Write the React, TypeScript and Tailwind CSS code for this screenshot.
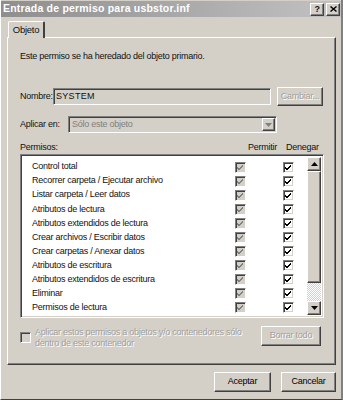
import React from "react";

const permisos = [
  "Control total",
  "Recorrer carpeta / Ejecutar archivo",
  "Listar carpeta / Leer datos",
  "Atributos de lectura",
  "Atributos extendidos de lectura",
  "Crear archivos / Escribir datos",
  "Crear carpetas / Anexar datos",
  "Atributos de escritura",
  "Atributos extendidos de escritura",
  "Eliminar",
  "Permisos de lectura",
];

// raised 3D edge, classic windows style
const raised =
  "border border-t-white border-l-white border-r-[#404040] border-b-[#404040] shadow-[inset_-1px_-1px_#808080,inset_1px_1px_#d4d0c8]";
const sunken =
  "border border-t-[#808080] border-l-[#808080] border-r-white border-b-white shadow-[inset_1px_1px_#404040,inset_-1px_-1px_#d4d0c8]";

const Check = ({ color }) => (
  <svg width="7" height="7" viewBox="0 0 7 7">
    <path d="M0 3 L2 5 L6 1 M0 4 L2 6 L6 2" stroke={color} strokeWidth="1" fill="none" />
  </svg>
);

const CheckBox = ({ disabled, checked }) => (
  <div
    className={`w-[11px] h-[11px] flex items-center justify-center ${sunken} ${
      disabled ? "bg-[#d4d0c8]" : "bg-white"
    }`}
  >
    {checked && <Check color={disabled ? "#808080" : "#000"} />}
  </div>
);

const Arrow = ({ down }) => (
  <svg width="7" height="4" viewBox="0 0 7 4">
    <path d={down ? "M0 0 H7 L3.5 4 Z" : "M0 4 H7 L3.5 0 Z"} fill="#000" />
  </svg>
);

const Button = ({ label, disabled, className }) => (
  <div
    className={`flex items-center justify-center bg-[#d4d0c8] ${raised} ${className} ${
      disabled ? "text-[#a0a0a0] [text-shadow:1px_1px_#fff]" : "text-black"
    }`}
  >
    {label}
  </div>
);

export default function App() {
  return (
    <div className="w-[343px] h-[400px] overflow-hidden bg-[#d4d0c8] text-[9px] tracking-[-0.25px] text-[#111] font-['Liberation_Sans',Arial,sans-serif] flex flex-col border-l border-l-white border-r-2 border-r-[#808080] border-b border-b-[#404040]">
      {/* title bar */}
      <div className="mt-[1px] h-[16px] flex items-center justify-between pl-[2px] pr-[1px] bg-gradient-to-r from-[#8e8e8e] to-[#c2c2c2]">
        <span className="text-white font-bold text-[10.5px] tracking-[0.2px]">Entrada de permiso para usbstor.inf</span>
        <div className="flex gap-[2px]">
          <div className={`w-[14px] h-[13px] bg-[#d4d0c8] ${raised} flex items-center justify-center text-[9px] font-bold leading-none`}>?</div>
          <div className={`w-[14px] h-[13px] bg-[#d4d0c8] ${raised} flex items-center justify-center`}>
            <svg width="7" height="6" viewBox="0 0 7 6">
              <path d="M0.5 0.5 L6.5 5.5 M6.5 0.5 L0.5 5.5" stroke="#000" strokeWidth="1.4" />
            </svg>
          </div>
        </div>
      </div>

      <div className="px-[6px] pt-[4px] flex flex-col">
        {/* tab */}
        <div className="flex">
          <div className="ml-[1px] w-[37px] h-[17px] border-t border-l border-t-white border-l-white border-r-2 border-r-[#404040] rounded-t-[2px] flex items-center justify-center text-[9.5px] -mb-[1px] bg-[#d4d0c8] relative z-10">
            Objeto
          </div>
        </div>

        {/* panel */}
        <div className="w-[329px] h-[328px] border border-t-white border-l-white border-r-[#404040] border-b-[#404040] shadow-[inset_-1px_-1px_#808080] pl-[12px] flex flex-col">
          <div className="mt-[13px] h-[11px] leading-[11px]">Este permiso se ha heredado del objeto primario.</div>

          <div className="mt-[25px] flex items-center h-[19px]">
            <span className="w-[33px] whitespace-nowrap">Nombre:</span>
            <div className={`w-[218px] h-[17px] bg-[#d4d0c8] ${sunken} flex items-center pl-[2px] tracking-[0.3px]`}>SYSTEM</div>
            <Button label="Cambiar..." disabled className="ml-[6px] w-[46px] h-[19px]" />
          </div>

          <div className="mt-[10px] flex items-center h-[17px]">
            <span className="w-[48px] whitespace-nowrap">Aplicar en:</span>
            <div className={`w-[209px] h-[17px] bg-[#d4d0c8] ${sunken} flex items-center justify-between pl-[3px] pr-[1px] text-[#808080]`}>
              <span>Sólo este objeto</span>
              <div className={`w-[13px] h-[13px] bg-[#d4d0c8] ${raised} flex items-center justify-center`}>
                <svg width="7" height="4" viewBox="0 0 7 4">
                  <path d="M0 0 H7 L3.5 4 Z" fill="#808080" />
                </svg>
              </div>
            </div>
          </div>

          <div className="mt-[9px] flex h-[11px] leading-[11px]">
            <span className="w-[228px]">Permisos:</span>
            <span className="w-[38px]">Permitir</span>
            <span>Denegar</span>
          </div>

          {/* list */}
          <div className={`mt-[1px] w-[304px] h-[164px] bg-white ${sunken} flex p-[2px]`}>
            <div className="flex-1 flex flex-col pt-[3px]">
              {permisos.map((p) => (
                <div key={p} className="h-[14.6px] flex items-center">
                  <span className="pl-[9px] w-[212px] whitespace-nowrap">{p}</span>
                  <CheckBox disabled checked />
                  <span className="w-[37px]" />
                  <CheckBox checked />
                </div>
              ))}
            </div>
            <div className="w-[14px] flex flex-col">
              <div className={`h-[14px] bg-[#d4d0c8] ${raised} flex items-center justify-center`}>
                <Arrow />
              </div>
              <div className={`h-[112px] bg-[#d4d0c8] ${raised}`} />
              <div className="flex-1 bg-[repeating-conic-gradient(#d4d0c8_0%_25%,#ffffff_0%_50%)] bg-[length:2px_2px]" />
              <div className={`h-[14px] bg-[#d4d0c8] ${raised} flex items-center justify-center`}>
                <Arrow down />
              </div>
            </div>
          </div>

          <div className="mt-[8px] flex items-start">
            <div className="mt-[6px]">
              <CheckBox disabled />
            </div>
            <div className="ml-[4px] mt-[1px] w-[222px] whitespace-nowrap leading-[11px] text-[#a0a0a0] [text-shadow:1px_1px_#fff]">
              Aplicar estos permisos a objetos y/o contenedores sólo
              <br />
              dentro de este contenedor
            </div>
            <Button label="Borrar todo" disabled className="ml-[4px] w-[60px] h-[20px]" />
          </div>
        </div>

        {/* footer buttons */}
        <div className="mt-[7px] flex justify-end gap-[10px] w-[329px]">
          <Button label="Aceptar" className="w-[57px] h-[20px]" />
          <Button label="Cancelar" className="w-[55px] h-[20px]" />
        </div>
      </div>
    </div>
  );
}
